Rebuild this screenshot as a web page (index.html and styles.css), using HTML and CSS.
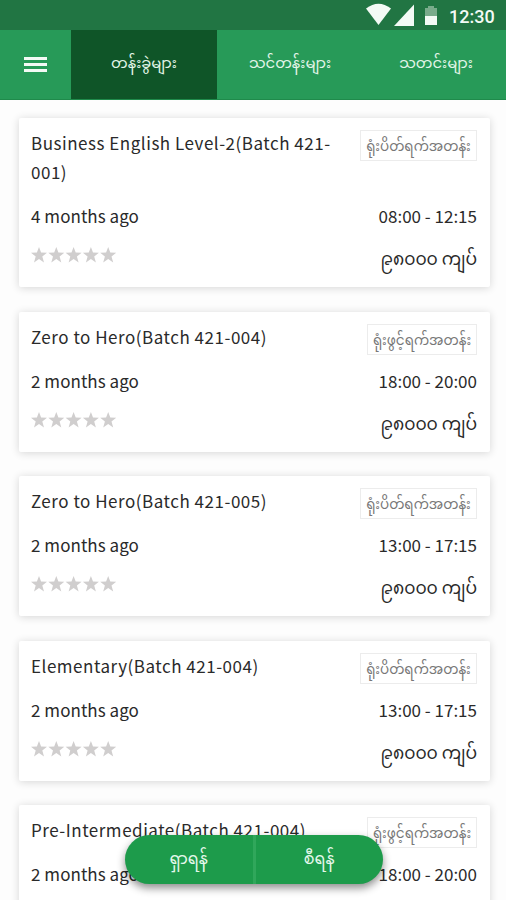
FILE: index.html
```
<!DOCTYPE html>
<html lang="my">
<head>
    <meta charset="UTF-8">
    <meta name="viewport" content="width=device-width, initial-scale=1.0">
    <title>တန်းခွဲများ</title>
    <link rel="stylesheet" href="styles.css">
</head>
<body>
    <svg class="defs" width="0" height="0">
        <symbol id="stars" viewBox="0 0 86 16">
            <path id="star" d="M8 0l2.100 5.600 5.900.2-4.700 3.700 1.700 5.900L8 12.100l-5 3.300 1.700-5.900L0 5.800l5.900-.2z"/>
            <use href="#star" x="17.3"/>
            <use href="#star" x="34.6"/>
            <use href="#star" x="51.9"/>
            <use href="#star" x="69.2"/>
        </symbol>
    </svg>

    <div class="status-bar">
        <svg class="status-icons" width="76" height="24" viewBox="0 0 76 24">
            <path d="M0 5.500Q12.500 -4 25 5.500L12.500 22z"/>
            <path d="M48 1.500v21.500H28z"/>
            <path class="battery-empty" d="M59 5h3V3h6v2h3v8H59z"/>
            <path d="M59 13h12v9H59z"/>
        </svg>
        <span class="clock">12:30</span>
    </div>

    <nav class="tabs">
        <div class="menu">
            <span></span>
            <span></span>
            <span></span>
        </div>
        <div class="tab active">တန်းခွဲများ</div>
        <div class="tab">သင်တန်းများ</div>
        <div class="tab">သတင်းများ</div>
    </nav>

    <main class="list">
        <div class="card">
            <div class="row head">
                <div class="title">Business English Level-2(Batch 421-001)</div>
                <div class="badge">ရုံးပိတ်ရက်အတန်း</div>
            </div>
            <div class="row when"><span>4 months ago</span><span class="time">08:00 - 12:15</span></div>
            <div class="row foot"><svg class="stars"><use href="#stars"/></svg><span class="price">၉၈၀၀၀ ကျပ်</span></div>
        </div>
        <div class="card">
            <div class="row head">
                <div class="title">Zero to Hero(Batch 421-004)</div>
                <div class="badge open">ရုံးဖွင့်ရက်အတန်း</div>
            </div>
            <div class="row when"><span>2 months ago</span><span class="time">18:00 - 20:00</span></div>
            <div class="row foot"><svg class="stars"><use href="#stars"/></svg><span class="price">၉၈၀၀၀ ကျပ်</span></div>
        </div>
        <div class="card">
            <div class="row head">
                <div class="title">Zero to Hero(Batch 421-005)</div>
                <div class="badge">ရုံးပိတ်ရက်အတန်း</div>
            </div>
            <div class="row when"><span>2 months ago</span><span class="time">13:00 - 17:15</span></div>
            <div class="row foot"><svg class="stars"><use href="#stars"/></svg><span class="price">၉၈၀၀၀ ကျပ်</span></div>
        </div>
        <div class="card">
            <div class="row head">
                <div class="title">Elementary(Batch 421-004)</div>
                <div class="badge">ရုံးပိတ်ရက်အတန်း</div>
            </div>
            <div class="row when"><span>2 months ago</span><span class="time">13:00 - 17:15</span></div>
            <div class="row foot"><svg class="stars"><use href="#stars"/></svg><span class="price">၉၈၀၀၀ ကျပ်</span></div>
        </div>
        <div class="card">
            <div class="row head">
                <div class="title">Pre-Intermediate(Batch 421-004)</div>
                <div class="badge open">ရုံးဖွင့်ရက်အတန်း</div>
            </div>
            <div class="row when"><span>2 months ago</span><span class="time">18:00 - 20:00</span></div>
        </div>
    </main>

    <div class="actions">
        <div class="action search">ရှာရန်</div>
        <div class="action">စီရန်</div>
    </div>
</body>
</html>
```
FILE: styles.css
```
* {
    box-sizing: border-box;
}

body {
    margin: 0;
    height: 900px;
    overflow: hidden;
    background: #fdfdfd;
    color: #2a2a2a;
    font-family: "Noto Sans CJK SC", "Noto Sans Myanmar", "Noto Sans", sans-serif;
    font-size: 17px;
}

.defs {
    position: absolute;
}

.status-bar {
    display: flex;
    justify-content: flex-end;
    align-items: center;
    height: 30px;
    padding-right: 11px;
    background: #217543;
}

.status-icons {
    margin-right: 7px;
    fill: #f3faf5;
}

.status-icons .battery-empty {
    fill: #79ab8b;
}

.clock {
    width: 46px;
    padding-top: 3px;
    color: #f3faf5;
    font: 500 18px/30px Roboto, sans-serif;
    white-space: nowrap;
}

.tabs {
    display: flex;
    height: 70px;
    background: #279a58;
    border-bottom: 1px solid #1f8a4b;
}

.menu {
    display: flex;
    flex: none;
    flex-direction: column;
    justify-content: center;
    align-items: center;
    gap: 3px;
    width: 71px;
}

.menu span {
    width: 23px;
    height: 3px;
    background: #f3faf5;
}

.tab {
    display: flex;
    flex: none;
    justify-content: center;
    align-items: center;
    width: 146px;
    padding-bottom: 6px;
    color: #e3f5e9;
    font-size: 14.800px;
    line-height: 30px;
    white-space: nowrap;
}

.tab.active {
    background: #0f5528;
}

.list {
    display: flex;
    flex-direction: column;
    gap: 24.500px;
    padding: 18px 16px 0 19px;
}

.card {
    flex: none;
    height: 140px;
    padding: 12px 13px 0 12px;
    background: #fff;
    border-radius: 2px;
    box-shadow: 0 1px 8px rgba(0, 0, 0, 0.16);
}

.card:first-child {
    height: 169px;
}

.row {
    display: flex;
    justify-content: space-between;
}

.head {
    align-items: flex-start;
    height: 42px;
}

.card:first-child .head {
    height: 71px;
}

.title {
    width: 310px;
    margin-top: -2px;
    line-height: 29px;
    letter-spacing: 0.52px;
}

.badge {
    width: 117px;
    height: 31px;
    border: 1px solid #ececec;
    color: #777;
    font-size: 13.500px;
    line-height: 29px;
    text-align: center;
    white-space: nowrap;
}

.badge.open {
    width: 110px;
}

.when {
    height: 29px;
    line-height: 29px;
    letter-spacing: 0.05px;
}

.time {
    letter-spacing: 0;
}

.stars {
    width: 86px;
    height: 16px;
    margin-top: 17px;
    fill: #d0cece;
}

.price {
    margin-top: 14px;
    font-size: 17.200px;
    line-height: 28px;
    white-space: nowrap;
}

/* search / sort buttons floating over the list */
.actions {
    position: absolute;
    left: 125px;
    top: 835px;
    display: flex;
    width: 258px;
    height: 49px;
    border-radius: 25px;
    background: #1d9b4b;
    box-shadow: 0 4px 8px rgba(0, 0, 0, 0.45);
}

.action {
    flex: 1;
    color: #e5f8eb;
    font-size: 16px;
    line-height: 44px;
    text-align: center;
    white-space: nowrap;
}

.search {
    border-right: 3px solid #30a75b;
}
```
